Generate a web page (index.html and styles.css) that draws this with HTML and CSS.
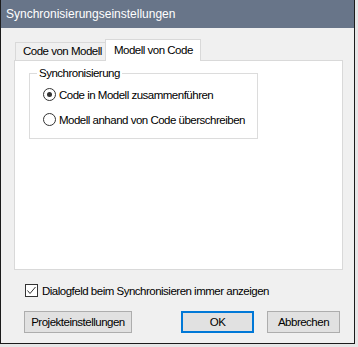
FILE: index.html
```html
<!DOCTYPE html>
<html>
<head>
<meta charset="utf-8">
<link rel="stylesheet" href="styles.css">
</head>
<body>
<div class="window">
  <div class="titlebar">Synchronisierungseinstellungen</div>
  <div class="content">
    <div class="tabs">
      <div class="tab">Code von Modell</div>
      <div class="tab active">Modell von Code</div>
    </div>
    <div class="panel">
      <fieldset class="group">
        <legend>Synchronisierung</legend>
        <label class="radio"><span class="rb checked"></span>Code in Modell zusammenführen</label>
        <label class="radio"><span class="rb"></span>Modell anhand von Code überschreiben</label>
      </fieldset>
    </div>
    <label class="check"><span class="cb"><svg width="11" height="11" viewBox="0 0 11 11"><path d="M1.5 5.5 L4 8.5 L9.5 2" fill="none" stroke="#333" stroke-width="1"/></svg></span>Dialogfeld beim Synchronisieren immer anzeigen</label>
    <div class="buttons">
      <div class="btn proj">Projekteinstellungen</div>
      <div class="spacer"></div>
      <div class="btn ok">OK</div>
      <div class="btn cancel">Abbrechen</div>
    </div>
  </div>
</div>
</body>
</html>
```
FILE: styles.css
```css
html, body { margin: 0; padding: 0; }
body {
  background: #e6e6e6;
  font-family: "Liberation Sans", Arial, sans-serif;
  font-size: 11.5px;
  letter-spacing: -0.5px;
  color: #000;
  width: 358px;
  height: 347px;
  overflow: hidden;
  white-space: nowrap;
}
.window {
  width: 353px;
  height: 343px;
  border-left: 1px solid #1b1b1b;
  border-right: 1px solid #1b1b1b;
  border-bottom: 1px solid #1b1b1b;
  background: #f0f0f0;
  display: flex;
  flex-direction: column;
}
.titlebar {
  height: 28px;
  background: #687589;
  color: #fff;
  font-size: 12px;
  letter-spacing: 0;
  line-height: 28px;
  padding-left: 5px;
  flex: none;
}
.content {
  flex: 1;
  display: flex;
  flex-direction: column;
  padding: 11px 11px 0 13px;
}
.tabs {
  display: flex;
  align-items: flex-end;
  height: 21px;
  padding-left: 1px;
}
.tab {
  line-height: 17px;
  padding: 0 0 0 7px;
  border: 1px solid #d9d9d9;
  border-bottom: none;
  border-right: none;
  background: #f0f0f0;
  box-sizing: border-box;
  height: 18px;
  width: 90px;
}
.tab.active {
  background: #fff;
  height: 22px;
  line-height: 20px;
  width: 96px;
  border-right: 1px solid #d9d9d9;
  margin-bottom: -1px;
  position: relative;
  padding-left: 8px;
}
.panel {
  height: 210px;
  background: #fff;
  border: 1px solid #d9d9d9;
  box-sizing: border-box;
  padding: 6px 0 0 14px;
}
.group {
  margin: 0;
  width: 229px;
  height: 72px;
  box-sizing: border-box;
  border: 1px solid #dcdcdc;
  padding: 0 0 0 13px;
}
.group legend {
  padding: 0 2px;
  margin-left: -6px;
  line-height: 13px;
}
.radio {
  display: flex;
  align-items: center;
  height: 13px;
  margin-top: 8px;
  margin-bottom: 12px;
}
.radio + .radio { margin-top: 0; }
.rb {
  width: 11px;
  height: 11px;
  border: 1px solid #333;
  border-radius: 50%;
  margin-right: 3px;
  position: relative;
  background: #fff;
  flex: none;
}
.rb.checked::after {
  content: "";
  position: absolute;
  left: 3px; top: 3px;
  width: 5px; height: 5px;
  border-radius: 50%;
  background: #333;
}
.check {
  display: flex;
  align-items: center;
  margin-top: 14px;
  margin-left: 11px;
  height: 13px;
}
.cb {
  width: 11px;
  height: 11px;
  border: 1px solid #333;
  background: #fff;
  margin-right: 4px;
  display: flex;
  flex: none;
}
.buttons {
  display: flex;
  margin-top: 14px;
  margin-left: 10px;
  margin-right: 3px;
}
.spacer { flex: 1; }
.btn {
  height: 22px;
  box-sizing: border-box;
  border: 1px solid #adadad;
  background: #e1e1e1;
  line-height: 20px;
  text-align: center;
}
.proj { width: 108px; }
.ok {
  width: 73px;
  border: 2px solid #0078d7;
  line-height: 18px;
  margin-right: 13px;
}
.cancel { width: 73px; }
```
